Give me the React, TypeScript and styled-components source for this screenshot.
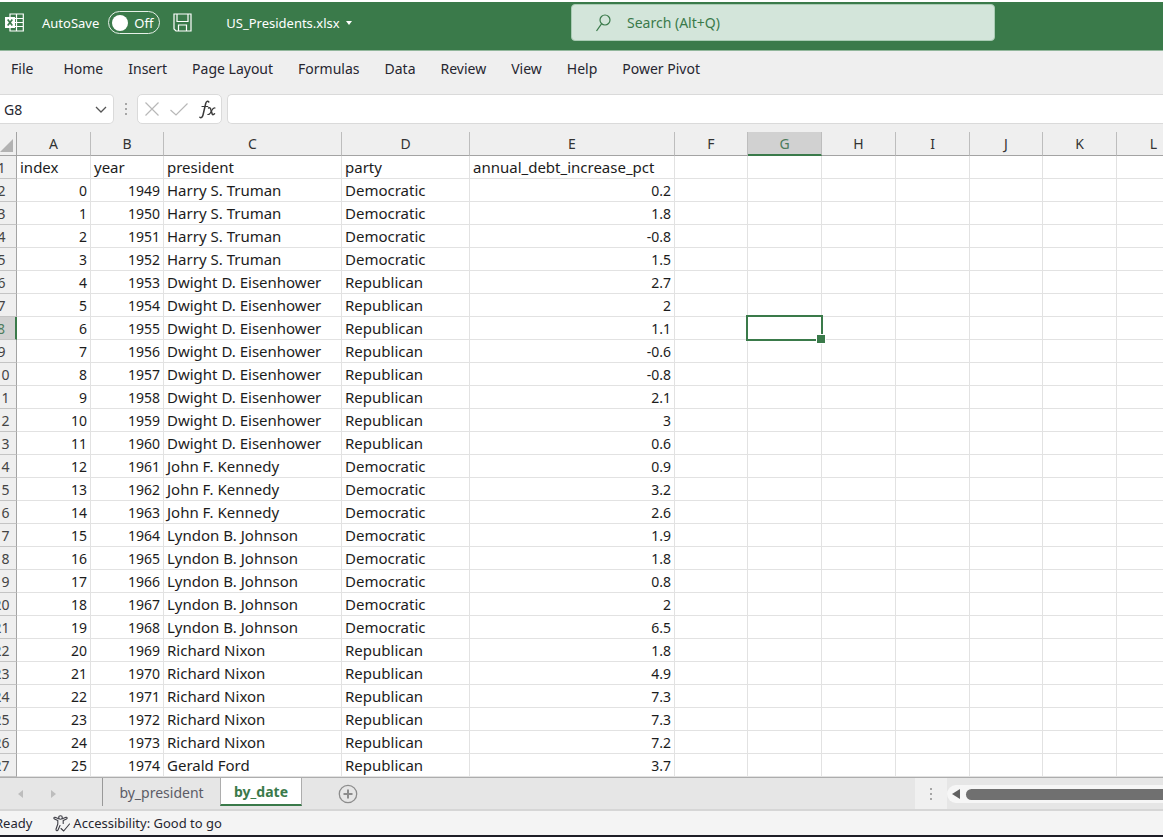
import React from "react";
import styled, { createGlobalStyle } from "styled-components";

const GREEN = "#3a7a4a";
const FONT = '"Noto Sans", "Open Sans", sans-serif';

const GlobalStyle = createGlobalStyle`
  * { box-sizing: border-box; }
  body { margin: 0; background: #fff; font-family: ${FONT}; color: #262630; }
  button, input { font: inherit; color: inherit; border: 0; padding: 0; margin: 0; background: none; outline: 0; }
  button { white-space: nowrap; }
  svg { display: block; flex: none; }
`;

const Window = styled.div`
  display: flex;
  flex-direction: column;
  padding: 2px 13px 1px 0;
  min-height: 100vh;
  overflow: hidden;
`;

const TitleBar = styled.header`
  display: flex;
  align-items: flex-start;
  height: 49px;
  padding-top: 2px;
  background: ${GREEN};
  border-bottom: 1px solid #92b79c;
  color: #fff;
`;

const TitleTools = styled.div`
  display: flex;
  flex: 1;
  align-items: center;
  height: 37px;
  padding-left: 5px;
  font-size: 13px;
`;

const AutoSave = styled.label`
  display: flex;
  align-items: center;
  gap: 9px;
  margin-left: 18px;
`;

const Toggle = styled.span`
  display: flex;
  align-items: center;
  gap: 6px;
  width: 52px;
  height: 23px;
  padding-left: 3px;
  border: 1px solid #e6f0e8;
  border-radius: 12px;
`;

const ToggleInput = styled.input`
  appearance: none;
  width: 16px;
  height: 16px;
  border-radius: 50%;
  background: #fff;
`;

const IconButton = styled.button`
  display: flex;
  align-items: center;
  justify-content: center;
`;

const SaveButton = styled(IconButton)`
  margin-left: 13px;
`;

const FileName = styled.button`
  display: flex;
  align-items: center;
  gap: 6px;
  margin-left: 34px;
`;

const Search = styled.label`
  display: flex;
  align-items: center;
  gap: 16px;
  width: 424px;
  height: 37px;
  margin-right: 168px;
  padding-left: 24px;
  border: 1px solid #a9cbb4;
  border-radius: 4px;
  background: #d3e5da;
  color: ${GREEN};
  font-size: 14px;
`;

const SearchInput = styled.input`
  flex: 1;
  min-width: 0;
  &::placeholder { color: ${GREEN}; opacity: 1; }
`;

const Menu = styled.nav`
  display: flex;
  align-items: center;
  gap: 25px;
  height: 43px;
  padding: 0 0 8px 11px;
  background: #efefef;
  font-size: 14px;
`;

const MenuItem = styled.button<{ $first?: boolean }>`
  margin-right: ${(p) => (p.$first ? 5 : 0)}px;
`;

const FormulaBar = styled.div`
  display: flex;
  align-items: center;
  height: 38px;
  padding-bottom: 8px;
  background: #efefef;
  font-size: 14px;
`;

const Field = styled.div`
  display: flex;
  align-items: center;
  height: 30px;
  border: 1px solid #dadada;
  border-radius: 5px;
  background: #fff;
`;

const NameBox = styled(Field)`
  width: 114px;
  padding: 0 6px 0 4px;
  border-left: 0;
  border-radius: 0 5px 5px 0;
`;

const NameInput = styled.input`
  flex: 1;
  min-width: 0;
`;

const Grip = styled.span`
  display: flex;
  justify-content: center;
  width: 23px;
`;

const FormulaTools = styled(Field)`
  justify-content: space-between;
  width: 85px;
  padding: 0 5px 0 7px;
`;

const FormulaField = styled(Field)`
  flex: 1;
  margin-left: 5px;
  border-right: 0;
  border-radius: 5px 0 0 5px;
`;

const FormulaInput = styled.input`
  width: 100%;
  padding: 0 8px;
`;

const Sheet = styled.main`
  overflow: hidden;
  background: #fff;
`;

const Grid = styled.table`
  table-layout: fixed;
  width: 1204px;
  margin-left: -13px;
  border-collapse: separate;
  border-spacing: 0;
  font-size: 14px;
  color: #1c1c1c;
`;

const Col = styled.col<{ $w: number }>`
  width: ${(p) => p.$w}px;
`;

const ColHead = styled.th<{ $active?: boolean }>`
  height: 24px;
  padding: ${(p) => (p.$active ? 1 : 0)}px 0 0;
  border-right: 1px solid #bdbdbd;
  border-bottom: ${(p) => (p.$active ? `2px solid ${GREEN}` : "1px solid #a3a3a3")};
  background: ${(p) => (p.$active ? "#d1d1d1" : "#efefef")};
  color: ${(p) => (p.$active ? "#4c7c5c" : "#333")};
  font-weight: 400;
  line-height: 20px;
`;

const Corner = styled(ColHead)`
  padding: 3px 3px 0 0;
  border-right-color: #a3a3a3;
`;

const CornerMark = styled.svg`
  margin-left: auto;
`;

const RowHead = styled.th<{ $active?: boolean }>`
  height: 23px;
  padding: 1px 0 0;
  border-right: ${(p) => (p.$active ? `2px solid ${GREEN}` : "1px solid #a3a3a3")};
  border-bottom: 1px solid #c4c4c4;
  background: ${(p) => (p.$active ? "#d1d1d1" : "#efefef")};
  color: ${(p) => (p.$active ? "#4c7c5c" : "#444")};
  font-weight: 400;
  line-height: 20px;
  vertical-align: baseline;
`;

const Cell = styled.td<{ $num?: boolean }>`
  position: relative;
  height: 23px;
  padding: 1px 3px 0 3px;
  border-right: 1px solid #e2e2e2;
  border-bottom: 1px solid #e2e2e2;
  text-align: ${(p) => (p.$num ? "right" : "left")};
  font-size: ${(p) => (p.$num ? 14 : 15)}px;
  line-height: 20px;
  vertical-align: baseline;
  white-space: nowrap;
`;

const Selection = styled.span`
  position: absolute;
  z-index: 1;
  inset: -2px;
  border: 2px solid ${GREEN};
  &::after {
    content: "";
    position: absolute;
    right: -5px;
    bottom: -5px;
    width: 8px;
    height: 8px;
    border: 1px solid #fff;
    background: ${GREEN};
  }
`;

const TabStrip = styled.div`
  display: flex;
  height: 34px;
  border-top: 1px solid #adadad;
  border-bottom: 2px solid #d6d6d6;
  background: #e6e6e6;
  font-size: 14px;
`;

const TabArrows = styled.div`
  display: flex;
  align-items: center;
  gap: 28px;
  width: 102px;
  height: 31px;
  padding-left: 18px;
`;

const SheetTab = styled.button<{ $active?: boolean }>`
  height: 28px;
  width: ${(p) => (p.$active ? 82 : 118)}px;
  border-left: 1px solid ${(p) => (p.$active ? "#adadad" : "#999")};
  border-right: ${(p) => (p.$active ? "1px solid #adadad" : "0")};
  border-bottom: ${(p) => (p.$active ? `2px solid ${GREEN}` : "0")};
  background: ${(p) => (p.$active ? "#fff" : "transparent")};
  color: ${(p) => (p.$active ? GREEN : "#5c5c66")};
  font-weight: ${(p) => (p.$active ? 700 : 400)};
`;

const AddSheet = styled(IconButton)`
  height: 31px;
  margin-left: 36px;
`;

const StripGrip = styled.span`
  display: flex;
  align-items: center;
  justify-content: center;
  width: 32px;
  margin-left: auto;
  background: #f0f0f0;
`;

const ScrollTrack = styled.div`
  display: flex;
  align-items: center;
  gap: 6px;
  width: 216px;
  height: 18px;
  margin-top: 7px;
  padding-left: 5px;
  border-radius: 9px 0 0 9px;
  background: #f6f6f6;
`;

const ScrollThumb = styled.span`
  flex: 1;
  height: 11px;
  border-radius: 6px 0 0 6px;
  background: #707070;
`;

const StatusBar = styled.footer`
  display: flex;
  align-items: center;
  gap: 21px;
  height: 26px;
  border-bottom: 2px solid #1d1d26;
  background: #f4f4f4;
  font-size: 13px;
`;

const Ready = styled.span`
  margin-left: -5px;
`;

const Accessibility = styled.button`
  display: flex;
  align-items: center;
  gap: 2px;
`;

const menuItems = ["File", "Home", "Insert", "Page Layout", "Formulas", "Data", "Review", "View", "Help", "Power Pivot"];

const columnWidths = [30, 74, 73, 178, 128, 205, 73, 74, 74, 74, 73, 74, 74];
const letters = ["A", "B", "C", "D", "E", "F", "G", "H", "I", "J", "K", "L"];
const blankLetters = letters.slice(5);

const terms: [string, string, string[]][] = [
  ["Harry S. Truman", "Democratic", ["0.2", "1.8", "-0.8", "1.5"]],
  ["Dwight D. Eisenhower", "Republican", ["2.7", "2", "1.1", "-0.6", "-0.8", "2.1", "3", "0.6"]],
  ["John F. Kennedy", "Democratic", ["0.9", "3.2", "2.6"]],
  ["Lyndon B. Johnson", "Democratic", ["1.9", "1.8", "0.8", "2", "6.5"]],
  ["Richard Nixon", "Republican", ["1.8", "4.9", "7.3", "7.3", "7.2"]],
  ["Gerald Ford", "Republican", ["3.7"]],
];

const records = terms
  .flatMap(([president, party, values]) => values.map((value) => ({ president, party, value })))
  .map((record, index) => ({ ...record, index, year: 1949 + index }));

const Dots = () => (
  <svg width="2" height="12" viewBox="0 0 2 12" fill="#a6a6a6">
    <rect y="0" width="2" height="2" />
    <rect y="5" width="2" height="2" />
    <rect y="10" width="2" height="2" />
  </svg>
);

const ExcelIcon = () => (
  <svg width="19" height="19" viewBox="0 0 19 19" fill="none" stroke="#fff" strokeWidth="1.2">
    <path d="M5 4V1H18.300V18H5V15M11.500 1V18M10 5.500H18.300M10 9.500H18.300M10 13.500H18.300" />
    <rect x="0" y="4" width="10" height="11" fill="#fff" stroke="none" />
    <path d="M2.700 6.500L7.300 12.500M7.300 6.500L2.700 12.500" stroke={GREEN} strokeWidth="1.700" />
  </svg>
);

const SaveIcon = () => (
  <svg width="19" height="19" viewBox="0 0 19 19" fill="none" stroke="#fff" strokeWidth="1.200">
    <path d="M1 1H18V18H3L1 16ZM4 1V8.500H15V1M5.500 18V12H13.500V18" />
  </svg>
);

const SearchIcon = () => (
  <svg width="15" height="18" viewBox="0 0 15 18" fill="none" stroke={GREEN} strokeWidth="1.200">
    <circle cx="9" cy="6" r="5" />
    <path d="M5.500 9.800L.5 17" />
  </svg>
);

const AccessibilityIcon = () => (
  <svg width="18" height="17" viewBox="0 0 18 17" fill="none" stroke="#3c3c44" strokeWidth="1.100" strokeLinecap="round" strokeLinejoin="round">
    <circle cx="7.500" cy="2.500" r="1.800" />
    <path d="M5.700 3.700L2 2.300C.8 2 .4 3.500 1.500 4L4.800 5.500V9L3 14.300C2.800 15.800 4.500 16.200 5 15L7 10.500M9.300 3.700L13 2.300C14.200 2 14.600 3.500 13.500 4L10.200 5.500V8.500" />
    <path d="M8 13.500L10.700 16L16.500 9" />
  </svg>
);

export default function App() {
  return (
    <Window>
      <GlobalStyle />
      <TitleBar>
        <TitleTools>
          <ExcelIcon />
          <AutoSave>
            AutoSave
            <Toggle>
              <ToggleInput type="checkbox" role="switch" />
              Off
            </Toggle>
          </AutoSave>
          <SaveButton aria-label="Save">
            <SaveIcon />
          </SaveButton>
          <FileName>
            US_Presidents.xlsx
            <svg width="6" height="4" viewBox="0 0 6 4" fill="#fff">
              <path d="M0 0H6L3 4Z" />
            </svg>
          </FileName>
        </TitleTools>
        <Search>
          <SearchIcon />
          <SearchInput type="text" aria-label="Search" placeholder="Search (Alt+Q)" />
        </Search>
      </TitleBar>

      <Menu>
        {menuItems.map((item, i) => (
          <MenuItem key={item} $first={i === 0}>
            {item}
          </MenuItem>
        ))}
      </Menu>

      <FormulaBar>
        <NameBox>
          <NameInput type="text" aria-label="Name box" defaultValue="G8" />
          <IconButton aria-label="Show names">
            <svg width="12" height="7" viewBox="0 0 12 7" fill="none" stroke="#555" strokeWidth="1.300">
              <path d="M1 1L6 6L11 1" />
            </svg>
          </IconButton>
        </NameBox>
        <Grip>
          <Dots />
        </Grip>
        <FormulaTools>
          <IconButton aria-label="Cancel">
            <svg width="14" height="14" viewBox="0 0 14 14" stroke="#b8b8b8" strokeWidth="1.200">
              <path d="M.5 .5L13.500 13.500M13.500 .5L.5 13.500" />
            </svg>
          </IconButton>
          <IconButton aria-label="Enter">
            <svg width="18" height="13" viewBox="0 0 18 13" fill="none" stroke="#b8b8b8" strokeWidth="1.200">
              <path d="M.5 7L6 12L17.500 .5" />
            </svg>
          </IconButton>
          <IconButton aria-label="Insert function">
            <svg width="17" height="19" viewBox="0 0 17 19" fill="none" stroke="#3a3a3a" strokeLinecap="round">
              <path d="M9.800 2C8.800 .6 7.300 1.200 6.700 3.500L4 15C3.400 17.500 2 18.300 .9 17.300" strokeWidth="1.500" />
              <path d="M3 6.500H8.800" strokeWidth="1.200" />
              <path d="M9.500 8C11 7.300 11.500 8 12 10L13 13.500C13.400 15 14.300 15 15.500 13.800" strokeWidth="1.500" />
              <path d="M16 8C14.500 7.500 13.500 9 12.500 11C11.300 13.500 10.300 15 8.800 14.500" strokeWidth="1.100" />
            </svg>
          </IconButton>
        </FormulaTools>
        <FormulaField>
          <FormulaInput type="text" aria-label="Formula" />
        </FormulaField>
      </FormulaBar>

      <Sheet>
        <Grid>
          <colgroup>
            {columnWidths.map((w, i) => (
              <Col key={i} $w={w} />
            ))}
          </colgroup>
          <thead>
            <tr>
              <Corner>
                <CornerMark width="13" height="13" viewBox="0 0 13 13" fill="#b2b2b2">
                  <path d="M13 0V13H0Z" />
                </CornerMark>
              </Corner>
              {letters.map((l) => (
                <ColHead key={l} scope="col" $active={l === "G"}>
                  {l}
                </ColHead>
              ))}
            </tr>
          </thead>
          <tbody>
            <tr>
              <RowHead scope="row">1</RowHead>
              <Cell>index</Cell>
              <Cell>year</Cell>
              <Cell>president</Cell>
              <Cell>party</Cell>
              <Cell>annual_debt_increase_pct</Cell>
              {blankLetters.map((l) => (
                <Cell key={l} />
              ))}
            </tr>
            {records.map((r) => (
              <tr key={r.index}>
                <RowHead scope="row" $active={r.index === 6}>
                  {r.index + 2}
                </RowHead>
                <Cell $num>{r.index}</Cell>
                <Cell $num>{r.year}</Cell>
                <Cell>{r.president}</Cell>
                <Cell>{r.party}</Cell>
                <Cell $num>{r.value}</Cell>
                {blankLetters.map((l) => (
                  <Cell key={l}>{r.index === 6 && l === "G" && <Selection />}</Cell>
                ))}
              </tr>
            ))}
          </tbody>
        </Grid>
      </Sheet>

      <TabStrip>
        <TabArrows>
          <IconButton aria-label="Previous sheets">
            <svg width="5" height="8" viewBox="0 0 5 8" fill="#bdbdbd">
              <path d="M5 0V8L0 4Z" />
            </svg>
          </IconButton>
          <IconButton aria-label="Next sheets">
            <svg width="5" height="8" viewBox="0 0 5 8" fill="#bdbdbd">
              <path d="M0 0V8L5 4Z" />
            </svg>
          </IconButton>
        </TabArrows>
        <SheetTab>by_president</SheetTab>
        <SheetTab $active>by_date</SheetTab>
        <AddSheet aria-label="New sheet">
          <svg width="20" height="20" viewBox="0 0 20 20" fill="none" stroke="#8c8c8c">
            <circle cx="10" cy="10" r="8.700" strokeWidth="1.300" />
            <path d="M10 5.500V14.500M5.500 10H14.500" strokeWidth="2" />
          </svg>
        </AddSheet>
        <StripGrip>
          <Dots />
        </StripGrip>
        <ScrollTrack>
          <IconButton aria-label="Scroll left">
            <svg width="8" height="10" viewBox="0 0 8 10" fill="#606060">
              <path d="M8 0V10L0 5Z" />
            </svg>
          </IconButton>
          <ScrollThumb />
        </ScrollTrack>
      </TabStrip>

      <StatusBar>
        <Ready>Ready</Ready>
        <Accessibility>
          <AccessibilityIcon />
          Accessibility: Good to go
        </Accessibility>
      </StatusBar>
    </Window>
  );
}
